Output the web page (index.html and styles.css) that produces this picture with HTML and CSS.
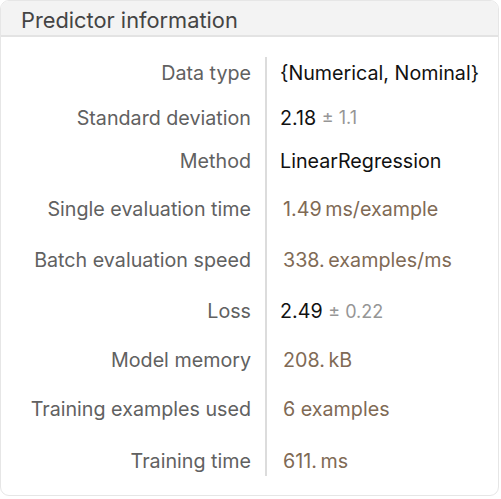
FILE: index.html
```html
<!DOCTYPE html>
<html>
<head>
<meta charset="utf-8">
<link rel="stylesheet" href="styles.css">
</head>
<body>
<div class="card">
  <div class="header">Predictor information</div>
  <div class="grid">
    <div class="label">Data type</div>
    <div class="value">{Numerical, Nominal}</div>
    <div class="label">Standard deviation</div>
    <div class="value">2.18 <span class="pm">± 1.1</span></div>
    <div class="label">Method</div>
    <div class="value">LinearRegression</div>
    <div class="label">Single evaluation time</div>
    <div class="value"><span class="qty">1.49&#8201;ms/example</span></div>
    <div class="label">Batch evaluation speed</div>
    <div class="value"><span class="qty">338.&#8201;examples/ms</span></div>
    <div class="label">Loss</div>
    <div class="value">2.49 <span class="pm">± 0.22</span></div>
    <div class="label">Model memory</div>
    <div class="value"><span class="qty">208.&#8201;kB</span></div>
    <div class="label">Training examples used</div>
    <div class="value"><span class="qty">6 examples</span></div>
    <div class="label last">Training time</div>
    <div class="value last"><span class="qty">611.&#8201;ms</span></div>
  </div>
</div>
</body>
</html>
```
FILE: styles.css
```css
html, body {
  margin: 0;
  padding: 0;
  background: #ffffff;
}
body {
  font-family: Inter, "Noto Sans", sans-serif;
}
.card {
  width: 497px;
  height: 494px;
  border: 1px solid #e6e6e6;
  border-radius: 9px;
  overflow: hidden;
  background: #ffffff;
}
.header {
  height: 34px;
  background: #f3f3f3;
  border-bottom: 2px solid #e3e3e3;
  padding-left: 20px;
  font-size: 21.8px;
  line-height: 38px;
  color: #444444;
}
.grid {
  margin-top: 20px;
  display: grid;
  grid-template-columns: 250px 1fr;
  grid-template-rows: 39px 43px 44px 51px 52px 50px 47px 51px 42px;
}
.label {
  display: flex;
  align-items: center;
  justify-content: flex-end;
  font-size: 19.7px;
  color: #616161;
}
.value {
  display: flex;
  align-items: center;
  margin-left: 14px;
  padding-left: 13px;
  border-left: 2px solid #dcdcdc;
  font-size: 19.7px;
  color: #111111;
  white-space: pre;
}
.label:first-child,
.grid > .value:nth-child(2) {
  padding-bottom: 8px;
}
.last {
  padding-top: 12px;
}
.pm {
  color: #969696;
  font-size: 18px;
}
.qty {
  color: #806a55;
  padding-left: 3px;
}
```
